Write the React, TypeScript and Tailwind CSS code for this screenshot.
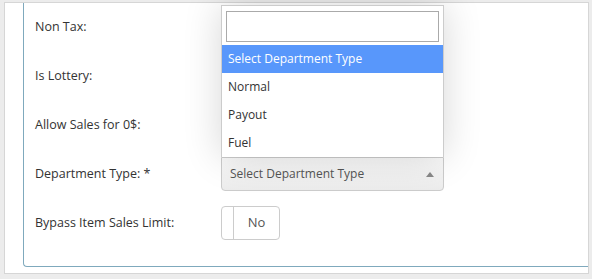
const font = { fontFamily: '"Open Sans", "Noto Sans", sans-serif' };

function Toggle() {
  return (
    <div className="flex h-[34px] w-[59px] rounded border border-[#ccc] bg-white">
      <div className="w-[12px] border-r border-[#ccc]" />
      <div className="flex flex-1 items-center justify-center text-[13px] text-[#555]">No</div>
    </div>
  );
}

function DepartmentSelect() {
  const options = ['Select Department Type', 'Normal', 'Payout', 'Fuel'];
  return (
    <div className="relative w-[223px]">
      {/* open dropdown */}
      <div className="absolute bottom-full left-0 z-10 w-full border border-b-0 border-[#ccc] bg-white shadow-[0_0_36px_rgba(0,0,0,0.16)]">
        <div className="px-[4px] pt-[5px] pb-[3px]">
          <div className="h-[31px] w-full border border-[#aaa] bg-white" />
        </div>
        <ul>
          {options.map((o, i) => (
            <li
              key={o}
              className={
                i === 0
                  ? 'flex h-[28px] items-center bg-[#5897fb] px-[6px] text-[12px] text-white'
                  : 'flex h-[28px] items-center px-[6px] text-[12px] text-[#333]'
              }
            >
              {o}
            </li>
          ))}
        </ul>
      </div>
      <div className="flex h-[34px] items-center justify-between rounded-b border border-[#ccc] bg-gradient-to-b from-[#fafafa] to-[#ececec] pl-[8px] pr-[9px]">
        <span className="text-[12px] text-[#555]">Select Department Type</span>
        <svg width="8" height="5" viewBox="0 0 8 5">
          <path d="M0 5 L4 0 L8 5 Z" fill="#888" />
        </svg>
      </div>
    </div>
  );
}

export default function App() {
  // rows 1-3 have toggles too, but the open dropdown hides them
  const rows: { label: string; control: 'hidden' | 'toggle' | 'select' }[] = [
    { label: 'Non Tax:', control: 'hidden' },
    { label: 'Is Lottery:', control: 'hidden' },
    { label: 'Allow Sales for 0$:', control: 'hidden' },
    { label: 'Department Type: *', control: 'select' },
    { label: 'Bypass Item Sales Limit:', control: 'toggle' },
  ];

  return (
    <div className="h-[279px] w-[592px] overflow-hidden bg-[#ececec] pl-[4px] pt-[2px] pr-[3px]" style={font}>
      <div className="h-[272px] border border-[#d6d6d6] bg-white">
        <div className="ml-[18px] flex h-[264px] flex-col gap-[15px] rounded-bl-[4px] border-b border-l border-[#7fa9bd] pt-[7px] pl-[11px]">
          {rows.map((r) => (
            <div key={r.label} className="flex h-[34px] items-center">
              <div className="w-[186px] text-[12.5px] text-[#333]">{r.label}</div>
              {r.control === 'toggle' && <Toggle />}
              {r.control === 'select' && <DepartmentSelect />}
            </div>
          ))}
        </div>
      </div>
    </div>
  );
}
